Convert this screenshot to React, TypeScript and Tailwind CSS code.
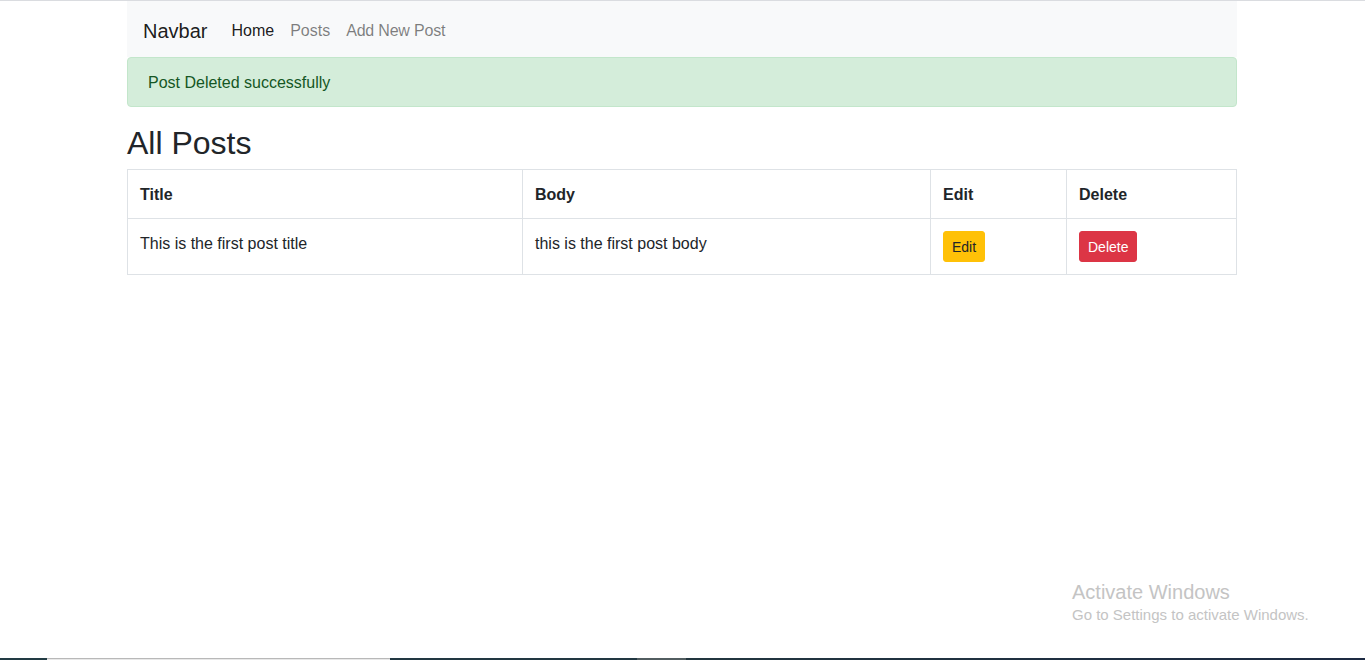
export default function App() {
  const cell = "border border-[#dee2e6] px-3 pt-[13px] pb-[11px] text-left";
  return (
    <div
      className="relative flex h-[660px] flex-col overflow-hidden border-t border-[#dadce0] bg-white text-[#212529]"
      style={{ fontFamily: '"Liberation Sans", Arial, sans-serif' }}
    >
      <div className="flex-1">
        <div className="ml-[127px] w-[1110px]">
          <nav className="flex h-[56px] items-center bg-[#f8f9fa] px-4 pt-[3px]">
            <span className="mr-4 text-[20px] leading-[30px] text-black/90">Navbar</span>
            <a className="px-2 text-[16px] leading-6 text-black/90">Home</a>
            <a className="px-2 text-[16px] leading-6 text-black/50">Posts</a>
            <a className="px-2 text-[16px] leading-6 tracking-[-0.2px] text-black/50">Add New Post</a>
          </nav>
          <div className="mb-4 rounded border border-[#c3e6cb] bg-[#d4edda] px-5 pt-[13px] pb-[11px] text-[16px] leading-6 text-[#155724]">
            Post Deleted successfully
          </div>
          <h2 className="mb-2 pt-[3px] text-[32px] font-medium leading-[35px]">All Posts</h2>
          <table className="w-full border-collapse text-[16px] leading-6">
            <thead>
              <tr>
                <th className={`w-[395px] font-bold ${cell}`}>Title</th>
                <th className={`w-[408px] font-bold ${cell}`}>Body</th>
                <th className={`w-[136px] font-bold ${cell}`}>Edit</th>
                <th className={`font-bold ${cell}`}>Delete</th>
              </tr>
            </thead>
            <tbody>
              <tr>
                <td className={`align-top ${cell}`}>This is the first post title</td>
                <td className={`align-top ${cell}`}>this is the first post body</td>
                <td className="border border-[#dee2e6] p-3 align-top">
                  <button className="h-[31px] rounded-[3px] border border-[#ffc107] bg-[#ffc107] px-2 pt-[1px] text-[14px] leading-[21px] text-[#212529]">
                    Edit
                  </button>
                </td>
                <td className="border border-[#dee2e6] p-3 align-top">
                  <button className="h-[31px] rounded-[3px] border border-[#dc3545] bg-[#dc3545] px-2 pt-[1px] text-[14px] leading-[21px] text-white">
                    Delete
                  </button>
                </td>
              </tr>
            </tbody>
          </table>
        </div>
      </div>

      <div className="pointer-events-none absolute left-[1072px] top-[578px] text-[#c4c4c4]">
        <div className="text-[20px] leading-[26px]">Activate Windows</div>
        <div className="text-[15px] leading-[20px]">Go to Settings to activate Windows.</div>
      </div>

      <div className="flex h-[2px] w-full shrink-0">
        <div className="w-[47px] bg-[#223b44]" />
        <div className="w-[343px] border-t border-[#b8b8b8] bg-[#e8e8e8]" />
        <div className="w-[247px] bg-[#223842]" />
        <div className="w-[49px] bg-[#525d60]" />
        <div className="flex-1 bg-gradient-to-r from-[#22363f] to-[#1d2a42]" />
      </div>
    </div>
  );
}
